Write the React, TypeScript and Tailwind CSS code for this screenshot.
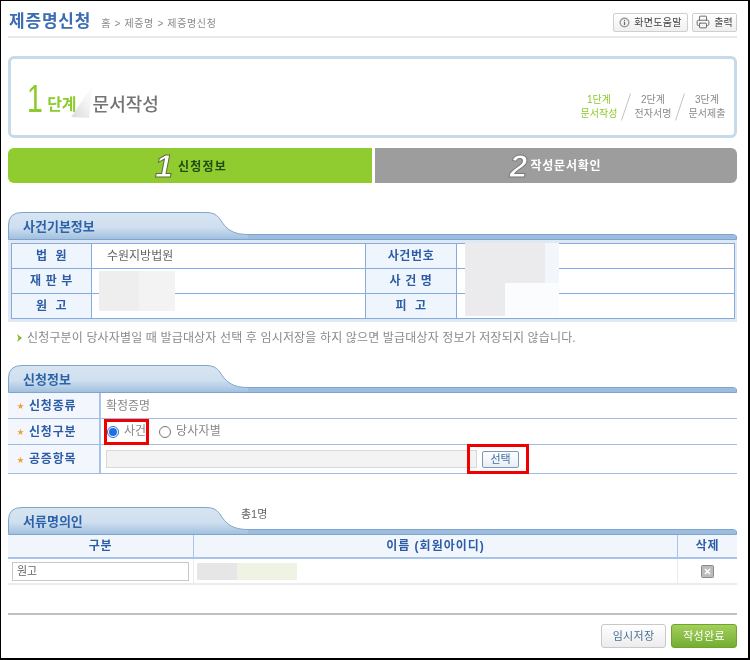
import React from 'react';
import { Printer } from 'lucide-react';

const FONT = "font-['Liberation_Sans','Noto_Sans_CJK_KR',sans-serif]";

function SectionTab({ id, label, children }: { id: string; label: string; children?: React.ReactNode }) {
  return (
    <div className="relative h-[28px] w-[729px]">
      <svg className="absolute inset-0" width="729" height="28" viewBox="0 0 729 28">
        <defs>
          <linearGradient id={id} x1="0" y1="0" x2="0" y2="1">
            <stop offset="0" stopColor="#d8e5f2" />
            <stop offset="0.55" stopColor="#cfdfef" />
            <stop offset="1" stopColor="#9fbfdf" />
          </linearGradient>
        </defs>
        <path
          d="M0.5 27.5V13Q0.5 0.5 14 0.5H198C212 0.5 211 9 219 16C224 20.5 231 22.5 240 22.5H725Q728.5 22.5 728.5 25V27.5Z"
          fill={`url(#${id})`}
          stroke="#7fa5cd"
        />
        <rect x="240" y="23" width="488" height="4" fill="#9dbde0" />
      </svg>
      <span className="relative block pl-[15px] pt-[6px] text-[13px] leading-[18px] font-bold text-[#2b62a8]">
        {label}
      </span>
      {children}
    </div>
  );
}

function InfoLabel({ children }: { children: React.ReactNode }) {
  return (
    <td className="border border-[#86abe3] bg-[#eff5fd] p-0 text-center text-[12px] font-bold tracking-[0.6px] text-[#2c5ca6]">
      {children}
    </td>
  );
}

function FormRow({ label, height, children }: { label: string; height: string; children: React.ReactNode }) {
  return (
    <div className={`flex border-b border-[#9dbce8] ${height}`}>
      <div className="flex w-[93px] shrink-0 items-center border-r-2 border-[#a9c4ec] bg-[#f3f7fd] pl-[9px] text-[12px] font-bold tracking-[0.8px] text-[#2c5ca6]">
        <span className="mr-[7px] w-[5px] text-[7px] leading-none text-[#f0a030]">★</span>
        {label}
      </div>
      <div className="relative flex flex-1 items-center">{children}</div>
    </div>
  );
}

function StageStep({ top, bottom, active }: { top: string; bottom: string; active?: boolean }) {
  return (
    <div className={`w-[36px] text-center text-[10px] leading-[14px] whitespace-nowrap ${active ? 'text-[#8ccb2c]' : 'text-[#8a8a8a]'}`}>
      <div>{top}</div>
      <div className="-mx-2">{bottom}</div>
    </div>
  );
}

function Slash() {
  return (
    <svg width="10" height="28" viewBox="0 0 10 28" className="mx-[4px]">
      <path d="M9.5 0.5L0.5 27.5" stroke="#c4c4c4" fill="none" />
    </svg>
  );
}

export default function App() {
  return (
    <div className={`${FONT} h-[660px] w-[750px] overflow-hidden border-t border-r-2 border-b-2 border-l border-black bg-white pl-[7px] text-[#666] blur-[0.35px]`}>
      <div className="w-[730px]">
        {/* Title */}
        <div className="flex h-[37px] w-[729px] items-center border-b-2 border-[#e8e8e8] pt-[7px]">
          <span className="ml-[1px] text-[17px] font-bold tracking-[0.8px] text-[#3b6db3]">제증명신청</span>
          <span className="ml-[10px] pt-[3px] text-[10px] tracking-[0.65px] text-[#8a8a8a]">홈 &gt; 제증명 &gt; 제증명신청</span>
          <div className="ml-auto flex gap-[4px]">
            <button className="flex h-[19px] w-[75px] items-center justify-center gap-[4px] rounded-[2px] border border-[#cfcfcf] bg-gradient-to-b from-white to-[#efefef] text-[10px] tracking-[0.3px] text-[#444]">
              <svg width="11" height="11" viewBox="0 0 11 11">
                <circle cx="5.5" cy="5.5" r="5" fill="#9a9a9a" />
                <circle cx="5.5" cy="5.5" r="3.6" fill="#f3f3f3" />
                <path d="M5.5 3V3.9M5.5 4.8V8" stroke="#666" strokeWidth="1.2" />
              </svg>
              화면도움말
            </button>
            <button className="flex h-[19px] w-[45px] items-center justify-center gap-[4px] rounded-[2px] border border-[#cfcfcf] bg-gradient-to-b from-white to-[#efefef] text-[10px] text-[#444]">
              <Printer size={14} strokeWidth={1.6} className="text-[#666]" />
              출력
            </button>
          </div>
        </div>

        {/* Stage box */}
        <div className="mt-[18px] flex h-[82px] w-[729px] items-center rounded-[6px] border-[3px] border-[#c6dae9] bg-white pr-[9px]">
          <span className="ml-[16px] mt-[4px] origin-left scale-x-75 text-[38px] leading-none text-[#8ccb2c]">1</span>
          <span className="mt-[16px] -ml-[1px] text-[16px] font-bold text-[#8ccb2c]">단계</span>
          <svg width="24" height="34" viewBox="0 0 24 34" className="-ml-[8px] mt-[10px]">
            <defs>
              <linearGradient id="fold" x1="0" y1="1" x2="1" y2="0">
                <stop offset="0" stopColor="#d9d9d9" />
                <stop offset="0.6" stopColor="#f4f4f4" />
                <stop offset="1" stopColor="#ffffff" />
              </linearGradient>
            </defs>
            <path d="M24 0L2 32L20 33Z" fill="url(#fold)" />
          </svg>
          <span className="mt-[16px] text-[18px] font-medium text-[#747474]">문서작성</span>
          <div className="ml-auto mt-[20px] flex items-center">
            <StageStep top="1단계" bottom="문서작성" active />
            <Slash />
            <StageStep top="2단계" bottom="전자서명" />
            <Slash />
            <StageStep top="3단계" bottom="문서제출" />
          </div>
        </div>

        {/* Step bar */}
        <div className="mt-[10px] flex h-[35px] w-[729px] overflow-hidden rounded-[6px]">
          <div className="flex w-[364px] items-center justify-center bg-[#90cb30] pl-[2px]">
            <span className="mr-[5px] text-[32px] leading-none font-bold text-white italic [-webkit-text-stroke:1px_#5c6b3a]">1</span>
            <span className="mt-[2px] text-[12px] font-bold tracking-[1.2px] text-[#1d4d10]">신청정보</span>
          </div>
          <div className="ml-[3px] flex flex-1 items-center justify-center bg-[#9d9d9d] pr-[1px]">
            <span className="mr-[3px] text-[32px] leading-none font-bold text-white italic [-webkit-text-stroke:1px_#777]">2</span>
            <span className="text-[12px] font-bold tracking-[0.8px] text-white">작성문서확인</span>
          </div>
        </div>

        {/* Case info */}
        <div className="mt-[29px]">
          <SectionTab id="tab1" label="사건기본정보" />
          <div className="relative w-[729px] bg-[#dfe9f3] p-[3px]">
            <table className="w-[723px] table-fixed border-collapse bg-white">
              <colgroup>
                <col className="w-[80px]" />
                <col className="w-[274px]" />
                <col className="w-[91px]" />
                <col className="w-[278px]" />
              </colgroup>
              <tbody>
                <tr className="h-[25px]">
                  <InfoLabel>법&nbsp;&nbsp;원</InfoLabel>
                  <td className="border border-[#86abe3] pl-[15px] text-[12px]">수원지방법원</td>
                  <InfoLabel>사건번호</InfoLabel>
                  <td className="border border-[#86abe3]" />
                </tr>
                <tr className="h-[25px]">
                  <InfoLabel>재&nbsp;판&nbsp;부</InfoLabel>
                  <td className="border border-[#86abe3]" />
                  <InfoLabel>사&nbsp;건&nbsp;명</InfoLabel>
                  <td className="border border-[#86abe3]" />
                </tr>
                <tr className="h-[25px]">
                  <InfoLabel>원&nbsp;&nbsp;고</InfoLabel>
                  <td className="border border-[#86abe3]" />
                  <InfoLabel>피&nbsp;&nbsp;고</InfoLabel>
                  <td className="border border-[#86abe3]" />
                </tr>
              </tbody>
            </table>
            {/* Redacted patches */}
            <div className="absolute top-[31px] left-[91px] flex h-[40px]">
              <div className="w-[40px] bg-[#eeeeee]" />
              <div className="w-[36px] bg-[#f3f3f3]" />
            </div>
            <div className="absolute top-[3px] left-[457px] h-[40px] w-[94px] bg-[#f3f6fa]" />
            <div className="absolute top-[3px] left-[457px] h-[40px] w-[80px] bg-[#ebebed]" />
            <div className="absolute top-[43px] left-[457px] h-[33px] w-[94px] bg-[#fbfcfd]" />
            <div className="absolute top-[43px] left-[457px] h-[33px] w-[40px] bg-[#ebebed]" />
          </div>
        </div>

        {/* Note */}
        <div className="mt-[8px] flex h-[16px] items-center text-[12px] tracking-[0.15px] text-[#8a8a8a]">
          <svg width="5" height="8" viewBox="0 0 5 8" className="mr-[5px] ml-[9px]">
            <path d="M0 0L5 4L0 8L1.5 4Z" fill="#8ab32a" />
          </svg>
          신청구분이 당사자별일 때 발급대상자 선택 후 임시저장을 하지 않으면 발급대상자 정보가 저장되지 않습니다.
        </div>

        {/* Request info */}
        <div className="mt-[19px] w-[729px]">
          <SectionTab id="tab2" label="신청정보" />
          <FormRow label="신청종류" height="h-[26px]">
            <span className="pl-[5px] text-[12px] text-[#888]">확정증명</span>
          </FormRow>
          <FormRow label="신청구분" height="h-[26px]">
            <span className="ml-[6px] flex h-[12px] w-[12px] items-center justify-center rounded-full border border-[#2a6fd6]">
              <span className="h-[8px] w-[8px] rounded-full bg-[#1f6fe0]" />
            </span>
            <span className="mb-[2px] ml-[5px] text-[12px] text-[#888]">사건</span>
            <span className="ml-[13px] h-[12px] w-[12px] rounded-full border border-[#777]" />
            <span className="mb-[2px] ml-[5px] text-[12px] tracking-[0.2px] text-[#888]">당사자별</span>
            <div className="absolute top-0 left-[3px] h-[26px] w-[45px] border-[3px] border-[#f00000]" />
          </FormRow>
          <FormRow label="공증항목" height="h-[29px]">
            <div className="ml-[5px] h-[18px] w-[371px] border border-[#d8d8d8] bg-[#f3f3f3]" />
            <button className="ml-[5px] h-[17px] w-[37px] rounded-[2px] border border-[#7d97bb] bg-gradient-to-b from-white to-[#e9eef5] text-[11px] leading-none text-[#3f6ea8]">선택</button>
            <div className="absolute -top-[1px] left-[366px] h-[30px] w-[62px] border-[3px] border-[#f00000]" />
          </FormRow>
        </div>

        {/* Signers */}
        <div className="mt-[33px] w-[729px]">
          <SectionTab id="tab3" label="서류명의인">
            <span className="absolute top-[-1px] left-[233px] text-[11px] text-[#666]">총1명</span>
          </SectionTab>
          <div className="flex h-[24px] border-b-2 border-[#a9c4ec] bg-[#f1f6fd] text-[12px] font-bold tracking-[0.6px] text-[#2c5ca6]">
            <div className="flex w-[186px] items-center justify-center border-r border-[#a9c4ec]">구분</div>
            <div className="flex w-[484px] items-center justify-center border-r border-[#a9c4ec] tracking-[1px]">이름 (회원아이디)</div>
            <div className="flex flex-1 items-center justify-center">삭제</div>
          </div>
          <div className="flex h-[26px] border-b-2 border-[#ececec]">
            <div className="flex w-[186px] items-center border-r border-[#ececec] pl-[4px]">
              <div className="flex h-[19px] w-[177px] items-center border border-[#c8c8c8] pl-[4px] text-[11px] text-[#666]">원고</div>
            </div>
            <div className="flex w-[484px] items-center border-r border-[#ececec] pl-[3px]">
              <div className="h-[17px] w-[40px] bg-[#e6e6e6]" />
              <div className="h-[17px] w-[60px] bg-[#eef3e4]" />
            </div>
            <div className="flex flex-1 items-center justify-center">
              <svg width="13" height="13" viewBox="0 0 13 13">
                <rect x="0.5" y="0.5" width="12" height="12" rx="1" fill="#bcbcbc" stroke="#8a8a8a" />
                <path d="M4 4L9 9M9 4L4 9" stroke="#fff" strokeWidth="1.6" />
              </svg>
            </div>
          </div>
        </div>

        {/* Footer */}
        <div className="mt-[28px] h-[2px] w-[729px] bg-[#c0c0c0]" />
        <div className="mt-[9px] flex w-[729px] justify-end gap-[5px]">
          <button className="h-[24px] w-[65px] rounded-[3px] border border-[#c8c8c8] bg-gradient-to-b from-white to-[#ececec] text-[11px] tracking-[0.3px] text-[#4a6f94]">임시저장</button>
          <button className="h-[24px] w-[66px] rounded-[3px] border border-[#6ea52c] bg-gradient-to-b from-[#a3d05a] to-[#74ad34] text-[11px] tracking-[0.3px] text-white">작성완료</button>
        </div>
      </div>
    </div>
  );
}
